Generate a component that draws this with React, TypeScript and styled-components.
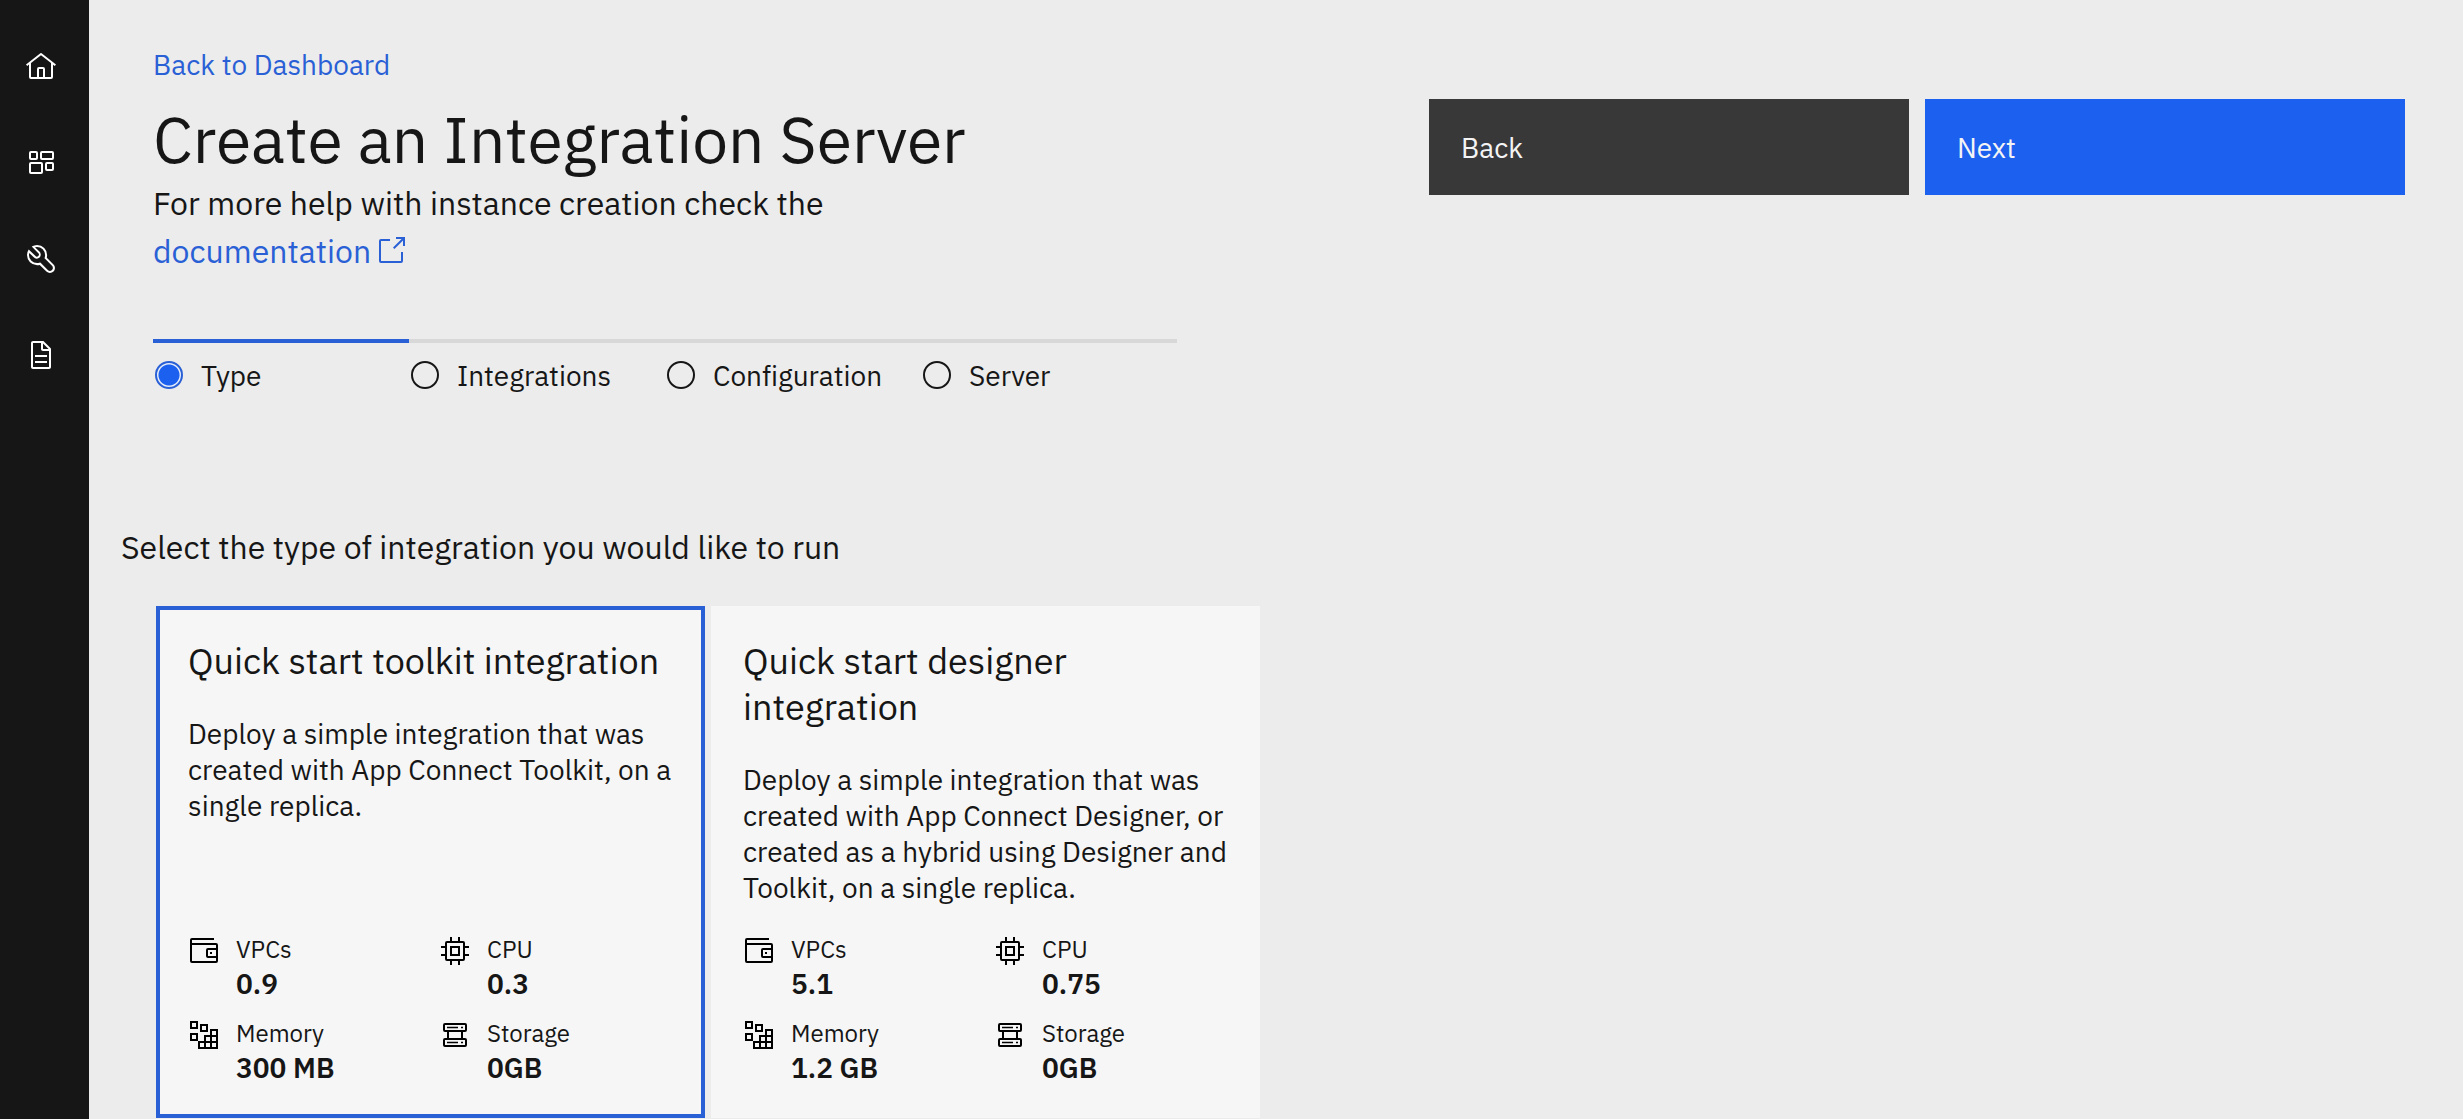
import React from "react";
import styled, { createGlobalStyle } from "styled-components";

const Global = createGlobalStyle`
  *, *::before, *::after { box-sizing: border-box; }
  body {
    margin: 0;
    background: #ececec;
    color: #161616;
    font-family: "IBM Plex Sans", Roboto, "Liberation Sans", sans-serif;
    font-variant-ligatures: none;
  }
  h1, h2, h3, p, dl, dd, dt, ul, fieldset { margin: 0; padding: 0; font-weight: 400; }
`;

const Shell = styled.div`
  display: flex;
  min-height: 100vh;
`;

const Rail = styled.nav`
  flex: none;
  width: 89px;
  background: #161616;
  padding: 51px 0 0 25px;
`;

const RailList = styled.ul`
  list-style: none;
  display: flex;
  flex-direction: column;
  gap: 64px;
`;

const RailLink = styled.a`
  display: block;
  height: 32px;
  color: #ffffff;
`;

const Icon = styled.svg`
  display: block;
  flex: none;
  width: 32px;
  height: 32px;
  fill: currentColor;
`;

const InlineIcon = styled(Icon)`
  display: inline-block;
  vertical-align: -4px;
  margin-left: 4px;
`;

const Main = styled.main`
  flex: 1;
  padding: 0 58px 0 32px;
`;

const Top = styled.header`
  display: flex;
  justify-content: space-between;
  padding: 43px 0 0 32px;
`;

const Crumb = styled.a`
  display: block;
  color: #2a60d6;
  font-size: 28px;
  line-height: 44px;
  text-decoration: none;
`;

const Title = styled.h1`
  margin-top: 12px;
  font-size: 64px;
  line-height: 80px;
`;

const Help = styled.p`
  width: 700px;
  font-size: 32px;
  line-height: 48px;
`;

const DocLink = styled.a`
  color: #2a60d6;
  text-decoration: none;
`;

const Actions = styled.div`
  display: flex;
  align-items: flex-start;
  gap: 16px;
  padding-top: 56px;
`;

const Action = styled.button<{ $primary?: boolean }>`
  width: 480px;
  height: 96px;
  padding: 0 32px;
  border: 0;
  background: ${(p) => (p.$primary ? "#1c60f0" : "#383838")};
  color: #f4f4f4;
  font: inherit;
  font-size: 28px;
  text-align: left;
`;

const Steps = styled.fieldset`
  border: 0;
  display: flex;
  margin: 64px 0 0 32px;
`;

const Step = styled.label`
  display: flex;
  align-items: center;
  gap: 16px;
  width: 256px;
  height: 68px;
  border-top: 4px solid #d8d8d8;
  font-size: 28px;

  &:has(input:checked) { border-color: #2a60d6; }
`;

const Radio = styled.input`
  appearance: none;
  flex: none;
  width: 28px;
  height: 28px;
  margin: 0 2px;
  border: 2px solid #161616;
  border-radius: 50%;

  &:checked {
    border-color: #2a60d6;
    background: radial-gradient(circle, #1c60f0 10px, #e4ecfa 11px);
  }
`;

const Prompt = styled.h2`
  margin-top: 116px;
  font-size: 32px;
  line-height: 48px;
`;

const Cards = styled.div`
  display: flex;
  gap: 6px;
  padding: 35px 0 0 35px;
`;

const Card = styled.article<{ $selected?: boolean }>`
  display: flex;
  flex-direction: column;
  width: 549px;
  min-height: 512px;
  padding: 28px;
  border: 4px solid ${(p) => (p.$selected ? "#2a60d6" : "#f6f6f6")};
  background: #f6f6f6;
`;

const CardTitle = styled.h3`
  font-size: 36px;
  line-height: 46px;
`;

const CardText = styled.p`
  margin: 32px 0 26px;
  font-size: 28px;
  line-height: 36px;
`;

const Specs = styled.dl`
  display: grid;
  grid-template-columns: 251px 1fr;
  row-gap: 14px;
  margin-top: auto;
`;

const Spec = styled.div`
  display: grid;
  grid-template-columns: 32px 1fr;
  grid-template-rows: 34px 36px;
  column-gap: 16px;
  color: #161616;

  svg {
    margin-top: 3px;
    color: #000000;
  }
`;

const SpecName = styled.dt`
  font-size: 24px;
  line-height: 34px;
`;

const SpecValue = styled.dd`
  grid-column: 2;
  font-size: 28px;
  line-height: 36px;
  font-weight: 600;
`;

const shapes: Record<string, React.ReactNode> = {
  home: (
    <path d="M16.6123 2.2138a1.01 1.01 0 0 0-1.2427 0L1 13.4194l1.2427 1.5717L4 13.6209V26a2.0041 2.0041 0 0 0 2 2H26a2.0037 2.0037 0 0 0 2-2V13.63L29.7573 15 31 13.4282ZM18 26H14V18h4Zm2 0V18a2.0023 2.0023 0 0 0-2-2H14a2.002 2.002 0 0 0-2 2v8H6V12.0615l10-7.79 10 7.8005V26Z" />
  ),
  dashboard: (
    <g fill="none" stroke="currentColor" strokeWidth="2">
      <rect x="5" y="5" width="7" height="7" rx="1" />
      <rect x="16" y="5" width="12" height="7" rx="1" />
      <rect x="5" y="16" width="12" height="10" rx="1" />
      <rect x="21" y="16" width="7" height="7" rx="1" />
    </g>
  ),
  tools: (
    <path d="M12.1 2a9.8 9.8 0 0 0-5.4 1.6l6.4 6.4a2.1 2.1 0 0 1 .2 3 2.1 2.1 0 0 1-3-.2L3.7 6.4A9.84 9.84 0 0 0 2 12.1 10.14 10.14 0 0 0 12.1 22.2a10.9 10.9 0 0 0 2.6-.3l6.7 6.7a5 5 0 0 0 7.1-7.1l-6.7-6.7a10.9 10.9 0 0 0 .3-2.6A10 10 0 0 0 12.1 2Zm8 10.1a7.61 7.61 0 0 1-.3 2.1l-.3 1.1.8.8 6.7 6.7a2.88 2.88 0 0 1 .9 2.1A2.72 2.72 0 0 1 27 27a2.9 2.9 0 0 1-4.2 0l-6.7-6.7-.8-.8-1.1.3a7.61 7.61 0 0 1-2.1.3 8.27 8.27 0 0 1-5.7-2.3A7.63 7.63 0 0 1 4 12.1a8.33 8.33 0 0 1 .3-2.2l4.4 4.4a4.14 4.14 0 0 0 5.9.2 4.14 4.14 0 0 0-.2-5.9L10 4.2a6.45 6.45 0 0 1 2-.3 8.27 8.27 0 0 1 5.7 2.3 8.49 8.49 0 0 1 2.4 5.9Z" />
  ),
  document: (
    <path d="M25.7 9.3l-7-7C18.5 2.1 18.3 2 18 2H8C6.9 2 6 2.9 6 4v24c0 1.1.9 2 2 2h16c1.1 0 2-.9 2-2V10c0-.3-.1-.5-.3-.7ZM18 4.4l5.6 5.6H18V4.4ZM24 28H8V4h8v6c0 1.1.9 2 2 2h6v16ZM10 22h12v2H10zM10 16h12v2H10z" />
  ),
  launch: (
    <>
      <path d="M26 28H6a2 2 0 0 1-2-2V6a2 2 0 0 1 2-2h9v2H6v20h20v-9h2v9a2 2 0 0 1-2 2Z" />
      <path d="M21 2v2h5.590L18 12.590 19.410 14 28 5.410V11h2V2h-9z" />
    </>
  ),
  wallet: (
    <path d="M22 17h2v2h-2zM28 8H4V5h22V3H4a2 2 0 0 0-2 2v21a2 2 0 0 0 2 2h24a2 2 0 0 0 2-2V10a2 2 0 0 0-2-2ZM4 26V10h24v3h-8a2 2 0 0 0-2 2v6a2 2 0 0 0 2 2h8v3Zm24-11v6h-8v-6Z" />
  ),
  chip: (
    <path d="M11 11v10h10V11Zm8 8h-6v-6h6ZM30 13v-2h-4V8a2 2 0 0 0-2-2h-3V2h-2v4h-6V2h-2v4H8a2 2 0 0 0-2 2v3H2v2h4v6H2v2h4v3a2 2 0 0 0 2 2h3v4h2v-4h6v4h2v-4h3a2 2 0 0 0 2-2v-3h4v-2h-4v-6Zm-6 11H8V8h16Z" />
  ),
  datastore: (
    <g fill="none" stroke="currentColor" strokeWidth="2">
      <path d="M3 3h6v6H3zM13 6h6v6h-6zM3 15h6v6H3z" />
      <path d="M23 11h6v18H11v-6h6v-6h6ZM17 23h12M23 17h6M17 23v6M23 17v12" />
    </g>
  ),
  storage: (
    <g fill="none" stroke="currentColor" strokeWidth="2">
      <rect x="5" y="5" width="22" height="7" rx="1" />
      <rect x="5" y="20" width="22" height="7" rx="1" />
      <path d="M9 12v8M23 12v8" />
      <path strokeWidth="1.5" d="M8 8.5h11M22 8.500h2M8 23.500h11M22 23.500h2" />
    </g>
  ),
};

const Glyph = ({ name }: { name: string }) => (
  <Icon viewBox="0 0 32 32" aria-hidden="true">{shapes[name]}</Icon>
);

const nav = [
  ["home", "Home"],
  ["dashboard", "Dashboard"],
  ["tools", "Tools"],
  ["document", "Documents"],
];

const steps = ["Type", "Integrations", "Configuration", "Server"];

const cards = [
  {
    title: "Quick start toolkit integration",
    text: "Deploy a simple integration that was created with App Connect Toolkit, on a single replica.",
    values: ["0.9", "0.3", "300 MB", "0GB"],
  },
  {
    title: "Quick start designer integration",
    text: "Deploy a simple integration that was created with App Connect Designer, or created as a hybrid using Designer and Toolkit, on a single replica.",
    values: ["5.1", "0.75", "1.2 GB", "0GB"],
  },
];

const specs = [
  ["wallet", "VPCs"],
  ["chip", "CPU"],
  ["datastore", "Memory"],
  ["storage", "Storage"],
];

export default function App() {
  return (
    <Shell>
      <Global />
      <Rail>
        <RailList>
          {nav.map(([icon, label]) => (
            <li key={icon}>
              <RailLink href="#" aria-label={label}><Glyph name={icon} /></RailLink>
            </li>
          ))}
        </RailList>
      </Rail>
      <Main>
        <Top>
          <div>
            <Crumb href="#">Back to Dashboard</Crumb>
            <Title>Create an Integration Server</Title>
            <Help>
              For more help with instance creation check the{" "}
              <DocLink href="#">
                documentation
                <InlineIcon viewBox="0 0 32 32" aria-hidden="true">{shapes.launch}</InlineIcon>
              </DocLink>
            </Help>
          </div>
          <Actions>
            <Action type="button">Back</Action>
            <Action type="button" $primary>Next</Action>
          </Actions>
        </Top>
        <Steps aria-label="Progress">
          {steps.map((s, i) => (
            <Step key={s}>
              <Radio type="radio" name="step" defaultChecked={i === 0} />
              {s}
            </Step>
          ))}
        </Steps>
        <Prompt>Select the type of integration you would like to run</Prompt>
        <Cards>
          {cards.map((c, i) => (
            <Card key={c.title} $selected={i === 0}>
              <CardTitle>{c.title}</CardTitle>
              <CardText>{c.text}</CardText>
              <Specs>
                {specs.map(([icon, label], n) => (
                  <Spec key={label}>
                    <Glyph name={icon} />
                    <SpecName>{label}</SpecName>
                    <SpecValue>{c.values[n]}</SpecValue>
                  </Spec>
                ))}
              </Specs>
            </Card>
          ))}
        </Cards>
      </Main>
    </Shell>
  );
}
